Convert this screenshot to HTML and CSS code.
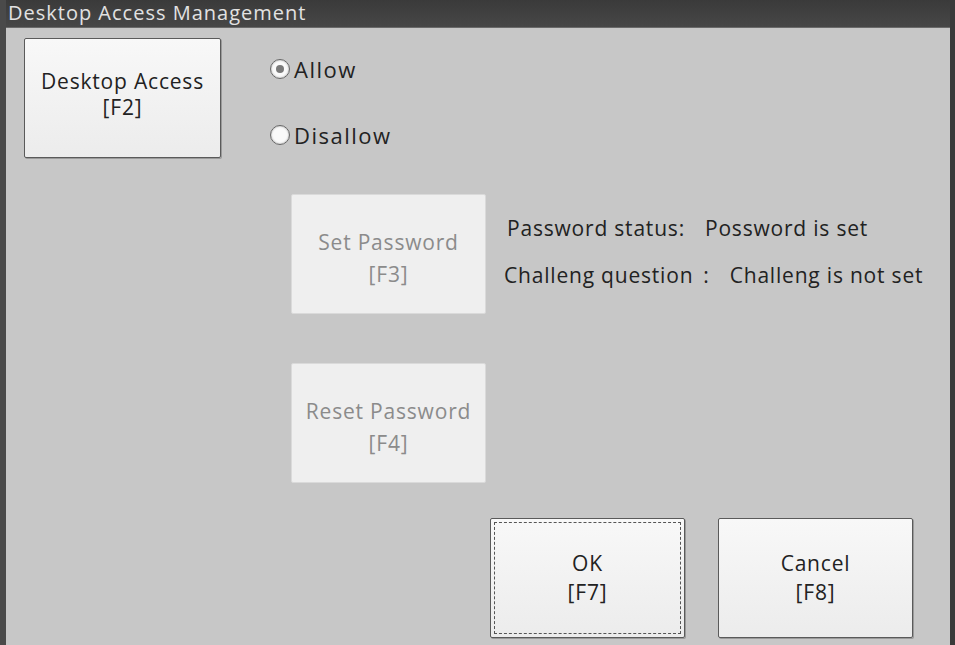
FILE: index.html
```html
<html>
<head>
  <title>Desktop Access Management</title>
  <link rel="stylesheet" href="styles.css">
</head>
<body>
  <div class="dialog">
    <div class="titlebar">Desktop Access Management</div>
    <div class="content">
      <div class="top">
        <button class="btn btn-main">Desktop Access<br>[F2]</button>
        <div class="radios">
          <label class="radio"><span class="dot checked"></span>Allow</label>
          <label class="radio"><span class="dot"></span>Disallow</label>
        </div>
      </div>
      <div class="password">
        <div class="pw-buttons">
          <button class="btn disabled">Set Password<br>[F3]</button>
          <button class="btn disabled">Reset Password<br>[F4]</button>
        </div>
        <div class="status">
          <p><span class="label">Password status:</span>Possword is set</p>
          <p><span class="label">Challeng question<span class="colon">:</span></span>Challeng is not set</p>
        </div>
      </div>
      <div class="actions">
        <button class="btn focused">OK<br>[F7]</button>
        <button class="btn">Cancel<br>[F8]</button>
      </div>
    </div>
  </div>
</body>
</html>
```

FILE: styles.css
```css
body {
  margin: 0;
  background: #c6c6c6;
  font: 21px "Open Sans", "Noto Sans", Arial, sans-serif;
  letter-spacing: 0.8px;
  color: #222;
}
.dialog {
  width: 955px;
  height: 645px;
  box-sizing: border-box;
  display: flex;
  flex-direction: column;
  border-left: 6px solid #4a4a4a;
  border-right: 5px solid #3a3a3a;
  overflow: hidden;
}
.titlebar {
  height: 28px;
  background: linear-gradient(#3a3a3a, #474747);
  color: #e2e2e2;
  font-size: 20px;
  letter-spacing: 1px;
  line-height: 25px;
  padding-left: 2px;
  border-bottom: 1px solid #6a6a6a;
  box-sizing: border-box;
}
.content {
  flex: 1;
  background: #c7c7c7;
  padding: 10px 0 0 18px;
}
.btn {
  width: 197px;
  height: 120px;
  border: 1px solid #5a5a5a;
  border-radius: 2px;
  background: linear-gradient(#f8f8f8, #ececec);
  box-shadow: 1px 1px 0 #9a9a9a;
  font: inherit;
  letter-spacing: inherit;
  color: #222;
  line-height: 29px;
  padding: 0;
}
.btn-main {
  line-height: 26px;
  padding-bottom: 9px;
}
.btn.disabled {
  border-color: #dadada;
  background: #efefef;
  color: #8b8b8b;
  box-shadow: none;
  line-height: 32px;
  padding-top: 8px;
}
.btn.focused {
  outline: 1px dashed #555;
  outline-offset: -5px;
}
.top {
  display: flex;
}
.radios {
  margin-left: 49px;
  padding-top: 21px;
  display: flex;
  flex-direction: column;
  gap: 46px;
}
.radio {
  display: flex;
  align-items: center;
  gap: 4px;
  height: 20px;
  font-size: 22px;
  letter-spacing: 1.5px;
}
.dot {
  width: 20px;
  height: 20px;
  border: 1px solid #666;
  border-radius: 50%;
  background: #fafafa;
  box-shadow: inset 0 0 2px #999;
  box-sizing: border-box;
  position: relative;
}
.dot.checked::after {
  content: "";
  position: absolute;
  left: 5px;
  top: 5px;
  width: 8px;
  height: 8px;
  border-radius: 50%;
  background: #7a7a7a;
}
.password {
  display: flex;
  margin: 36px 0 0 267px;
}
.pw-buttons {
  display: flex;
  flex-direction: column;
  gap: 49px;
}
.pw-buttons .btn {
  width: 195px;
}
.status {
  margin-left: 18px;
  padding-top: 19px;
}
.status p {
  margin: 0 0 17px;
  line-height: 30px;
  white-space: nowrap;
}
.status p:first-child {
  padding-left: 3px;
}
.label {
  display: inline-block;
  margin-right: 20px;
}
.colon {
  margin-left: 10px;
}
.actions {
  display: flex;
  gap: 33px;
  margin: 35px 0 0 466px;
}
.actions .btn {
  width: 195px;
}
```
